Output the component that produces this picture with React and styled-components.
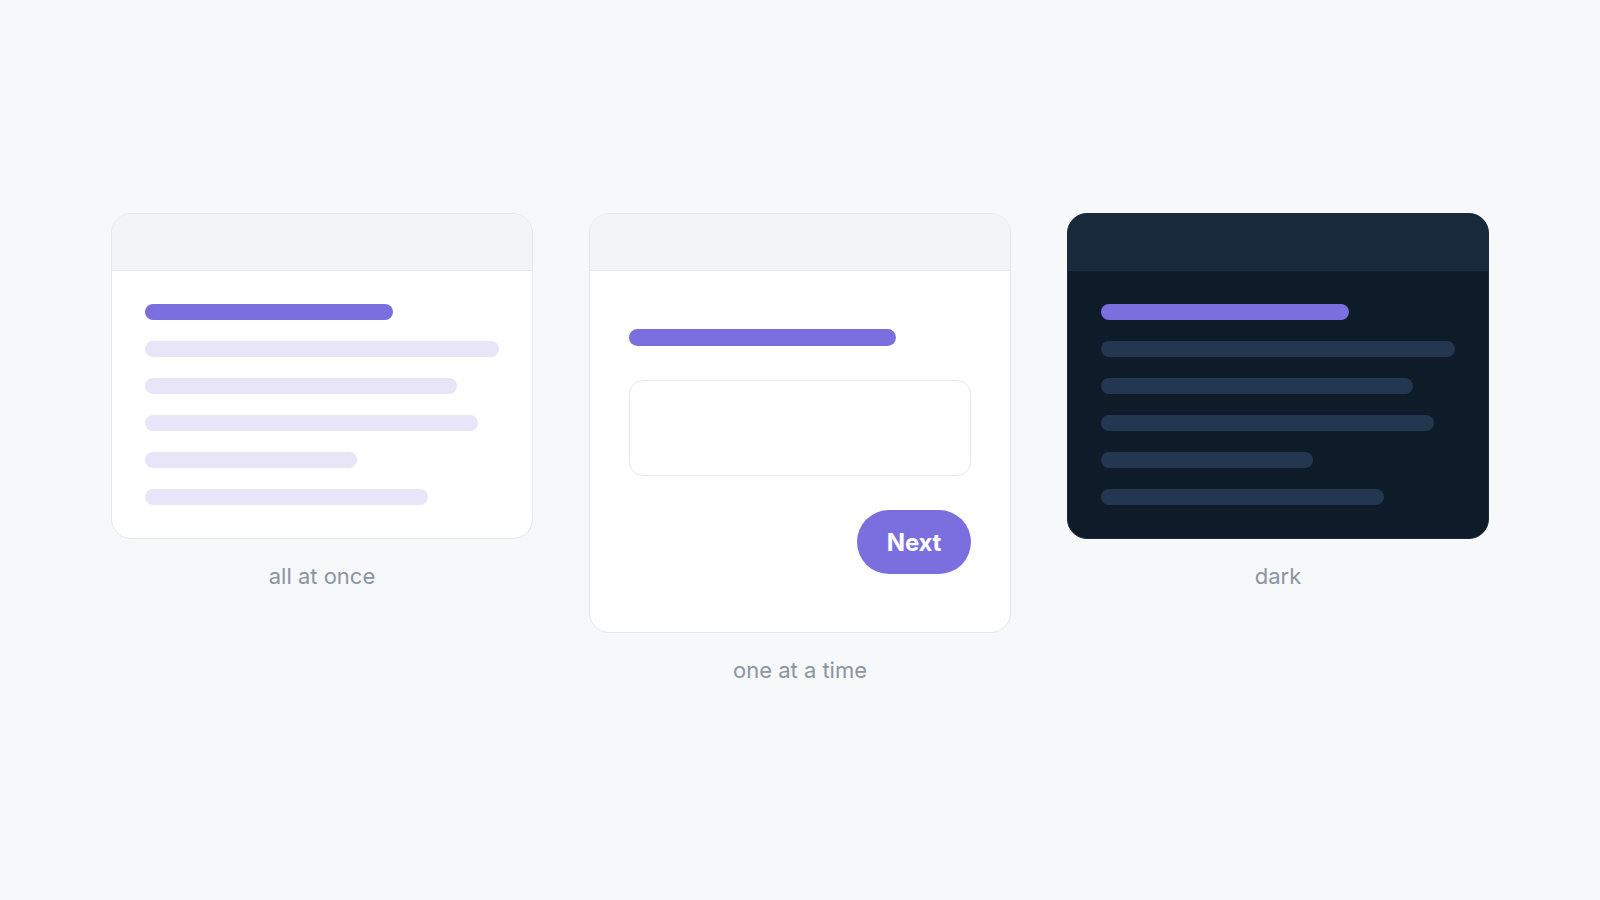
import React from "react";
import styled, { createGlobalStyle } from "styled-components";

const GlobalStyle = createGlobalStyle`
  html, body {
    margin: 0;
    padding: 0;
    background: #f7f8fa;
  }
  body {
    font-family: Inter, "Liberation Sans", Arial, sans-serif;
  }
`;

const Page = styled.div`
  min-height: 100vh;
  display: flex;
  align-items: center;
  justify-content: center;
`;

const Row = styled.div`
  display: flex;
  align-items: flex-start;
  gap: 56px;
`;

const Column = styled.div`
  display: flex;
  flex-direction: column;
  align-items: center;
  width: 422px;
`;

const Card = styled.div`
  width: 100%;
  box-sizing: border-box;
  border-radius: 20px;
  overflow: hidden;
  border: 1px solid ${(p) => (p.$dark ? "#1b2c3f" : "#e5e7eb")};
  background: ${(p) => (p.$dark ? "#0e1b29" : "#ffffff")};
`;

const TitleBar = styled.div`
  height: 56px;
  background: ${(p) => (p.$dark ? "#18293c" : "#f3f4f8")};
  border-bottom: 1px solid ${(p) => (p.$dark ? "#1d2f43" : "#e5e7eb")};
`;

const ListBody = styled.div`
  display: flex;
  flex-direction: column;
  gap: 21px;
  padding: 33px;
`;

const Bar = styled.div`
  height: 16px;
  border-radius: 8px;
  background: ${(p) => p.$color};
`;

const StepBody = styled.div`
  display: flex;
  flex-direction: column;
  padding: 58px 39px;
`;

const StepTitle = styled.div`
  height: 17px;
  width: 78%;
  border-radius: 9px;
  background: #7b6fdf;
`;

const InputBox = styled.div`
  margin-top: 34px;
  height: 96px;
  box-sizing: border-box;
  border: 1px solid #e5e7eb;
  border-radius: 14px;
  background: #fff;
`;

const Actions = styled.div`
  display: flex;
  justify-content: flex-end;
  margin-top: 34px;
`;

const NextButton = styled.button`
  width: 114px;
  height: 64px;
  border: none;
  border-radius: 32px;
  background: #7b6fdf;
  color: #fff;
  font-family: Inter, "Liberation Sans", Arial, sans-serif;
  font-size: 24px;
  font-weight: 700;
  letter-spacing: -0.2px;
  cursor: pointer;
`;

const Label = styled.div`
  margin-top: 20px;
  font-size: 22px;
  line-height: 34px;
  color: #8b94a1;
`;

const widths = [70, 100, 88, 94, 60, 80];

function ListCard({ dark }) {
  const accent = "#7b6fdf";
  const muted = dark ? "#233850" : "#e8e5f8";
  return (
    <Card $dark={dark}>
      <TitleBar $dark={dark} />
      <ListBody>
        {widths.map((w, i) => (
          <Bar key={i} $color={i === 0 ? accent : muted} style={{ width: `${w}%` }} />
        ))}
      </ListBody>
    </Card>
  );
}

export default function App() {
  return (
    <>
      <GlobalStyle />
      <Page>
        <Row>
          <Column>
            <ListCard />
            <Label>all at once</Label>
          </Column>
          <Column>
            <Card>
              <TitleBar />
              <StepBody>
                <StepTitle />
                <InputBox />
                <Actions>
                  <NextButton>Next</NextButton>
                </Actions>
              </StepBody>
            </Card>
            <Label>one at a time</Label>
          </Column>
          <Column>
            <ListCard dark />
            <Label>dark</Label>
          </Column>
        </Row>
      </Page>
    </>
  );
}
